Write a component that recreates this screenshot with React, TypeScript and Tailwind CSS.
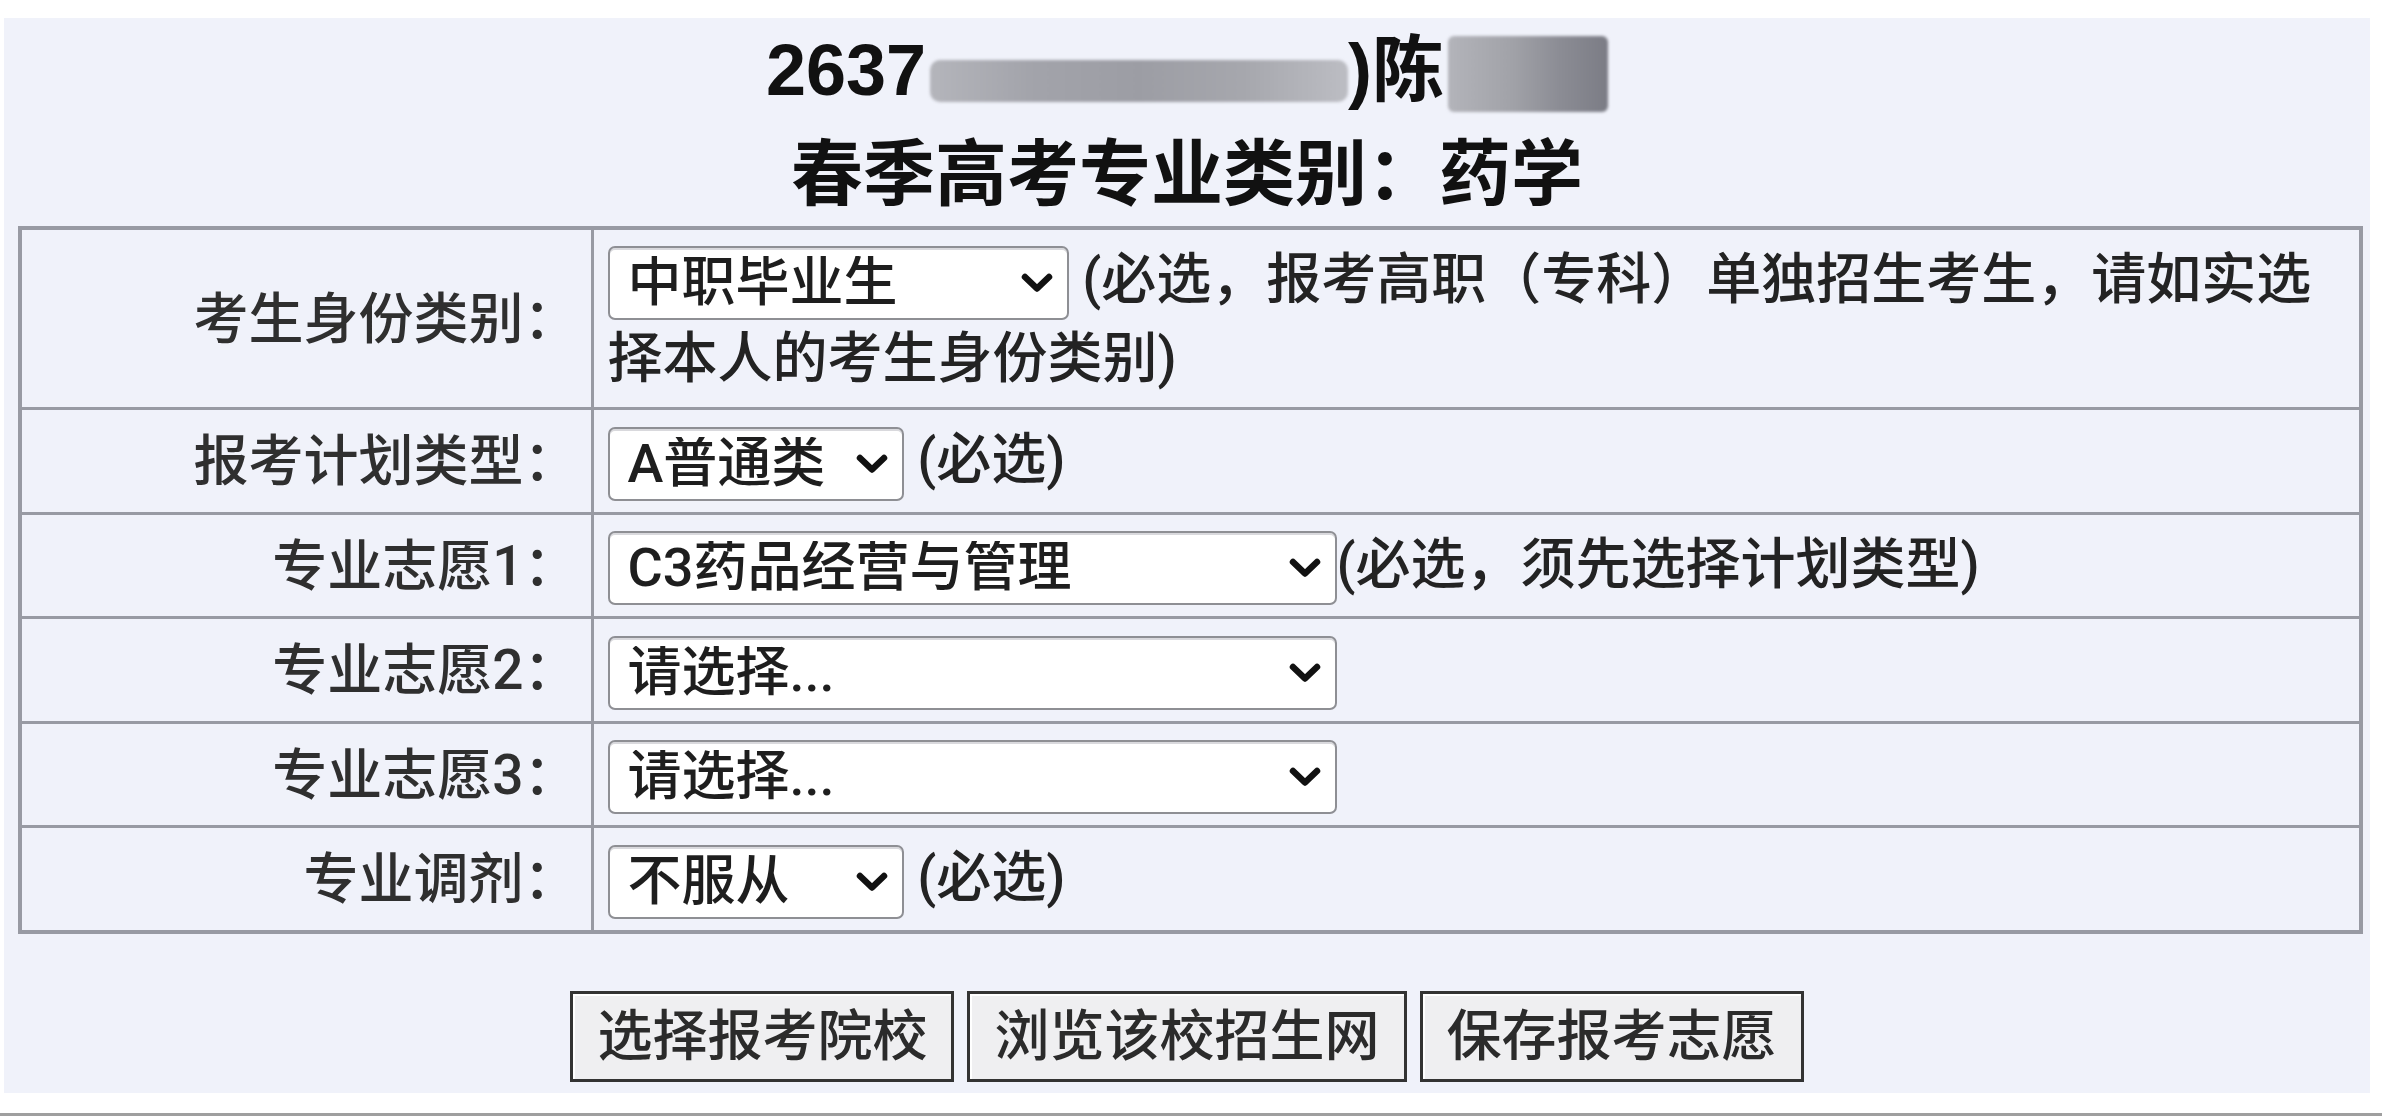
import type React from 'react';

const FONT = { fontFamily: 'Roboto, "Noto Sans CJK SC", sans-serif' };

interface ISelectBoxProps {
  width: string;
  value: string;
}

// dropdown drawn like the mobile browser's native one
const SelectBox = ({ width, value }: ISelectBoxProps) => (
  <span className={`relative inline-block align-middle ${width}`}>
    <select
      defaultValue={value}
      className="block h-[74px] w-full appearance-none rounded-[7px] border-2 border-[#8e8f94] bg-white pl-[18px] pr-[60px] text-[54px] font-medium leading-none text-[#1e1e1e] shadow-[inset_0_2px_0_#d9d9dd]"
      style={FONT}
    >
      <option>{value}</option>
    </select>
    <svg
      className="pointer-events-none absolute right-[16px] top-1/2 h-[20px] w-[32px] -translate-y-1/2"
      viewBox="0 0 32 20"
      fill="none"
    >
      <path d="M4 4 L16 15.5 L28 4" stroke="#111" strokeWidth="6.5" strokeLinecap="round" strokeLinejoin="round" />
    </svg>
  </span>
);

const Row = ({ label, children }: { label: string; children: React.ReactNode }) => (
  <tr>
    <td className="border-[3px] border-[#989aa3] py-[11px] pr-[12px] text-right align-middle leading-[76px] text-[#2f2f2f]">
      {label}
    </td>
    <td className="border-[3px] border-[#989aa3] py-[11px] pl-[14px] pr-[10px] align-middle leading-[76px] text-[#232323]">
      {children}
    </td>
  </tr>
);

const App = () => {
  return (
    <div className="min-h-screen bg-white pt-[18px] text-[55px] font-medium" style={FONT}>
      <div className="ml-[4px] w-[2366px] bg-[#f0f2fa] pb-[11px]">
        <div className="text-center text-[72px] font-bold leading-[104px] text-[#111]" style={{ fontFamily: '"Liberation Sans", "Noto Sans CJK SC", sans-serif' }}>
          <div className="flex items-center justify-center">
            <span>2637</span>
            <span className="ml-[4px] mt-[22px] inline-block h-[42px] w-[418px] rounded-[10px] bg-[linear-gradient(90deg,#b4b5bb_0%,#a2a3aa_25%,#9c9da4_50%,#a6a7ad_75%,#bcbdc3_100%)] blur-[1.5px]" />
            <span>)陈</span>
            <span className="ml-[4px] mt-[8px] inline-block h-[76px] w-[160px] rounded-[6px] bg-[linear-gradient(90deg,#b3b4ba_0%,#a1a2a8_40%,#8b8c94_70%,#7b7c85_100%)] blur-[1.5px]" />
          </div>
          <div>春季高考专业类别：药学</div>
        </div>

        <table className="ml-[14px] w-[2345px] table-fixed border-collapse border-[4px] border-[#989aa3]">
          <colgroup>
            <col className="w-[572px]" />
            <col />
          </colgroup>
          <tbody>
            <Row label="考生身份类别：">
              <SelectBox width="w-[461px]" value="中职毕业生" />
              {' '}(必选，报考高职（专科）单独招生考生，请如实选择本人的考生身份类别)
            </Row>
            <Row label="报考计划类型：">
              <SelectBox width="w-[296px]" value="A普通类" />
              {' '}(必选)
            </Row>
            <Row label="专业志愿1：">
              <SelectBox width="w-[729px]" value="C3药品经营与管理" />
              (必选，须先选择计划类型)
            </Row>
            <Row label="专业志愿2：">
              <SelectBox width="w-[729px]" value="请选择..." />
            </Row>
            <Row label="专业志愿3：">
              <SelectBox width="w-[729px]" value="请选择..." />
            </Row>
            <Row label="专业调剂：">
              <SelectBox width="w-[296px]" value="不服从" />
              {' '}(必选)
            </Row>
          </tbody>
        </table>

        <div className="mt-[57px] flex justify-center gap-[13px]">
          {['选择报考院校', '浏览该校招生网', '保存报考志愿'].map((t) => (
            <button
              key={t}
              type="button"
              className="h-[91px] border-[3px] border-[#333] bg-[#efeff1] px-[24px] text-[55px] font-medium leading-none text-[#2b2b2b] shadow-[inset_2px_2px_0_#ffffff]"
            >
              {t}
            </button>
          ))}
        </div>
      </div>
      <div className="mt-[20px] h-[4px] w-full bg-[#9f9f9f]" />
    </div>
  );
};

export default App;
